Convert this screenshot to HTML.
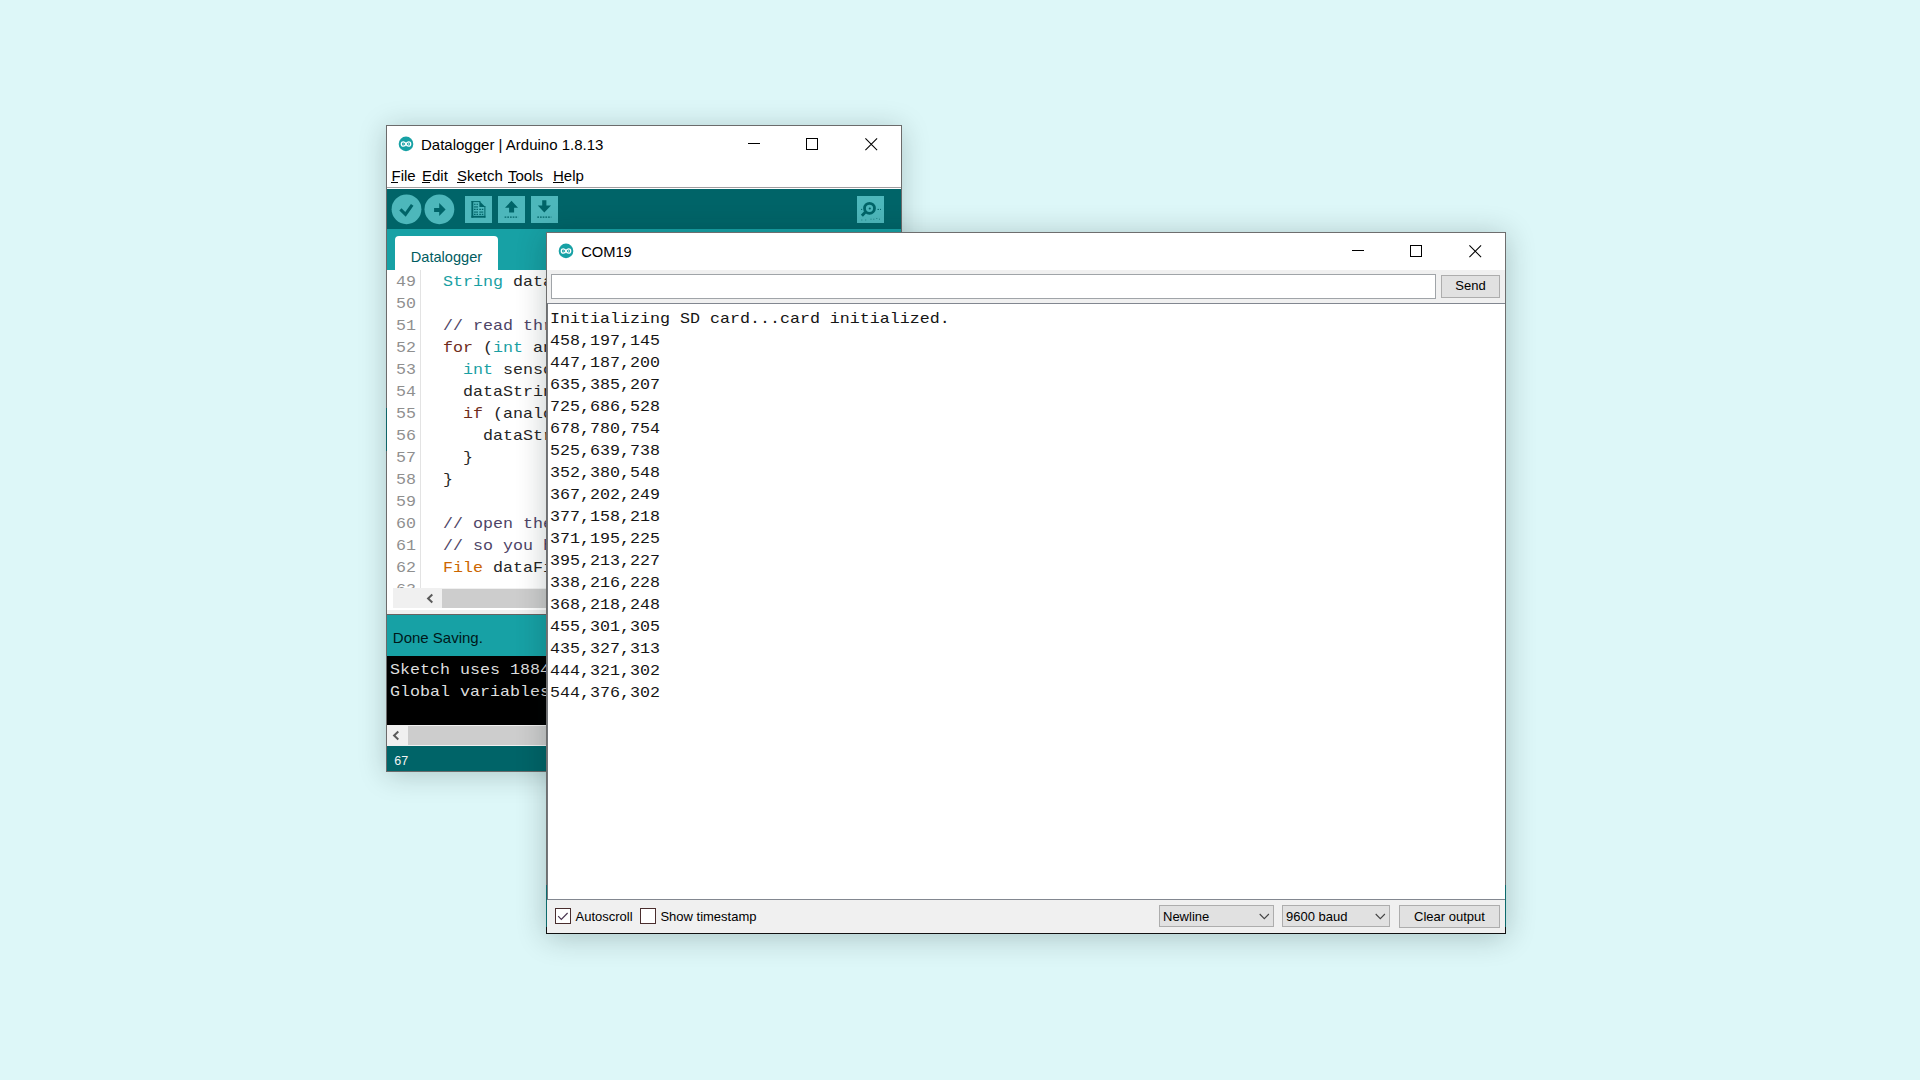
<!DOCTYPE html>
<html><head><meta charset="utf-8">
<style>
*{margin:0;padding:0;box-sizing:border-box}
html,body{width:1920px;height:1080px;overflow:hidden;background:#DDF7F8;font-family:"Liberation Sans",sans-serif;position:relative}
.abs{position:absolute}
.win{position:absolute;background:#fff;overflow:hidden}
.mono{font-family:"Liberation Mono",monospace;font-size:16.6667px;letter-spacing:0;white-space:pre;line-height:26.1905px;transform:scaleY(0.84);transform-origin:0 0}
.t15{font-size:15px;white-space:pre;line-height:18px;color:#000}
.t13{font-size:13px;white-space:pre;line-height:16px;color:#000}
u{text-decoration:none;border-bottom:1px solid #000;display:inline-block;line-height:14px}
.kw{color:#1A9FA3}.st{color:#6E2C1C}.cm{color:#4E4466}.fn{color:#CC6600}
</style></head><body>

<div id="ard" class="win" style="left:386px;top:125px;width:516px;height:647px;border:1px solid #6b6b6b;box-shadow:0 3px 26px rgba(0,30,30,0.21)">
<svg class="abs" style="left:11px;top:10px" width="16" height="16" viewBox="0 0 16 16">
<circle cx="8" cy="7.9" r="7.3" fill="#17A1A5"/>
<path d="M8 8 C7.2 5.3 3.3 4.9 3.3 8 C3.3 11.1 7.2 10.7 8 8 C8.8 5.3 12.7 4.9 12.7 8 C12.7 11.1 8.8 10.7 8 8 Z" fill="none" stroke="#fff" stroke-width="1.35"/>
<path d="M4.7 8h1.6M9.8 8h1.6M10.6 7.2v1.6" stroke="#e8f8f8" stroke-width="0.6"/>
</svg>
<div class="abs t15" style="left:34px;top:10px">Datalogger | Arduino 1.8.13</div>
<div class="abs" style="left:361px;top:17px;width:12px;height:1px;background:#000"></div>
<div class="abs" style="left:419px;top:12px;width:12px;height:12px;border:1px solid #000"></div>
<svg class="abs" style="left:478px;top:12px" width="13" height="13" viewBox="0 0 13 13"><path d="M0.4 0.4L12.1 12.1M12.1 0.4L0.4 12.1" stroke="#000" stroke-width="1.05"/></svg>
<div class="abs t15" style="left:4.5px;top:41px">File</div>
<div class="abs t15" style="left:35.0px;top:41px">Edit</div>
<div class="abs t15" style="left:70.0px;top:41px">Sketch</div>
<div class="abs t15" style="left:121.0px;top:41px">Tools</div>
<div class="abs t15" style="left:166.0px;top:41px">Help</div>
<div class="abs" style="left:4px;top:56px;width:7px;height:1px;background:#000"></div>
<div class="abs" style="left:35px;top:56px;width:8px;height:1px;background:#000"></div>
<div class="abs" style="left:70px;top:56px;width:8px;height:1px;background:#000"></div>
<div class="abs" style="left:121px;top:56px;width:8px;height:1px;background:#000"></div>
<div class="abs" style="left:166px;top:56px;width:11px;height:1px;background:#000"></div>
<div class="abs" style="left:0;top:61px;width:514px;height:1px;background:#a09da0"></div>
<div class="abs" style="left:0;top:63px;width:514px;height:40px;background:#006468"></div>
<svg class="abs" style="left:0;top:63px" width="514" height="40" viewBox="0 0 514 40">
<g fill="#4DB7BB">
<circle cx="19.5" cy="20.3" r="14.9"/>
<circle cx="52.4" cy="20.3" r="14.9"/>
<rect x="78" y="7" width="27" height="27"/>
<rect x="111" y="7" width="27" height="27"/>
<rect x="144" y="7" width="27" height="27"/>
<rect x="470" y="7" width="27" height="27"/>
</g>
<path d="M13.4 20.3 L18.5 25.4 L25.2 15.8" fill="none" stroke="#006468" stroke-width="3.1" stroke-linejoin="miter"/>
<path d="M47.1 19 H52.2 V14 L58.6 20.5 L52.2 27 V22.9 H47.1 Z" fill="#006468"/>
<g fill="#006468">
<rect x="84.4" y="12.1" width="1.9" height="16.6"/>
<rect x="84.4" y="26.8" width="14" height="1.9"/>
<rect x="84.4" y="12.1" width="9" height="1"/>
<rect x="97.4" y="17" width="1" height="11.7"/>
<path d="M92.4 12.1 L98.4 18 H92.4 Z"/>
</g>
<g stroke="#006468" stroke-width="1.1" stroke-dasharray="1.6 0.9">
<path d="M87 15.2h4M87 20.4h4M92.3 20.4h4M87 25.4h4M92.3 25.4h4"/>
</g>
<g fill="#006468" opacity="0.75">
<rect x="87" y="17.2" width="4" height="1.4"/>
<rect x="87" y="22.4" width="4" height="1.4"/>
<rect x="92.3" y="22.4" width="4" height="1.4"/>
</g>
<path d="M124.5 11.8 L131 18.8 H127.1 V23.5 H122.1 V18.8 H118 Z" fill="#006468"/>
<path d="M117.6 28.2h13.6" stroke="#006468" stroke-width="1.3" stroke-dasharray="1.7 1"/>
<path d="M155.2 11.3 H159.4 V16.5 H164 L157.3 23.5 L150.8 16.5 H155.2 Z" fill="#006468"/>
<path d="M150.3 28.2h14" stroke="#006468" stroke-width="1.3" stroke-dasharray="1.7 1"/>
<circle cx="482.5" cy="19.3" r="5" fill="none" stroke="#006468" stroke-width="2.8"/>
<circle cx="482.8" cy="19.5" r="1.1" fill="#006468"/>
<path d="M478.2 23.3 L474.9 26.8" stroke="#006468" stroke-width="2.8"/>
<path d="M474 20.4h1.2M490.5 20.4h1.5M493 20.4h1" stroke="#006468" stroke-width="1"/>
<g fill="#006468" opacity="0.6">
<rect x="474.3" y="30.5" width="1" height="1"/><rect x="478.2" y="30.5" width="1" height="1"/>
<rect x="483.5" y="29.7" width="1" height="1"/><rect x="486.3" y="29.7" width="1" height="1"/><rect x="489.3" y="29" width="1" height="1"/><rect x="492" y="29.7" width="1" height="1"/>
</g>
</svg>

<div class="abs" style="left:0;top:103px;width:514px;height:41px;background:#17A1A5"></div>
<div class="abs" style="left:8px;top:110px;width:103px;height:34px;background:#fff;border-radius:4px 4px 0 0"></div>
<div class="abs t15" style="left:23.8px;top:121.5px;color:#005C5F;font-size:14.6px">Datalogger</div>
<div class="abs" style="left:33px;top:144px;width:1px;height:318px;background:#e3e3e3"></div>
<div class="abs" style="left:0;top:144px;width:514px;height:318px;overflow:hidden">
<div class="abs mono" style="left:9px;top:2px;color:#8f8f8f">49</div>
<div class="abs mono" style="left:9px;top:24px;color:#8f8f8f">50</div>
<div class="abs mono" style="left:9px;top:46px;color:#8f8f8f">51</div>
<div class="abs mono" style="left:9px;top:68px;color:#8f8f8f">52</div>
<div class="abs mono" style="left:9px;top:90px;color:#8f8f8f">53</div>
<div class="abs mono" style="left:9px;top:112px;color:#8f8f8f">54</div>
<div class="abs mono" style="left:9px;top:134px;color:#8f8f8f">55</div>
<div class="abs mono" style="left:9px;top:156px;color:#8f8f8f">56</div>
<div class="abs mono" style="left:9px;top:178px;color:#8f8f8f">57</div>
<div class="abs mono" style="left:9px;top:200px;color:#8f8f8f">58</div>
<div class="abs mono" style="left:9px;top:222px;color:#8f8f8f">59</div>
<div class="abs mono" style="left:9px;top:244px;color:#8f8f8f">60</div>
<div class="abs mono" style="left:9px;top:266px;color:#8f8f8f">61</div>
<div class="abs mono" style="left:9px;top:288px;color:#8f8f8f">62</div>
<div class="abs mono" style="left:9px;top:310px;color:#8f8f8f">63</div>
<div class="abs mono" style="left:36px;top:2px;color:#262626">  <span class="kw">String</span> dataString = "";</div>
<div class="abs mono" style="left:36px;top:46px;color:#262626">  <span class="cm">// read three sensors and append to the string:</span></div>
<div class="abs mono" style="left:36px;top:68px;color:#262626">  <span class="st">for</span> (<span class="kw">int</span> analogPin = 0; analogPin &lt; 3; analogPin++) {</div>
<div class="abs mono" style="left:36px;top:90px;color:#262626">    <span class="kw">int</span> sensor = analogRead(analogPin);</div>
<div class="abs mono" style="left:36px;top:112px;color:#262626">    dataString += String(sensor);</div>
<div class="abs mono" style="left:36px;top:134px;color:#262626">    <span class="st">if</span> (analogPin &lt; 2) {</div>
<div class="abs mono" style="left:36px;top:156px;color:#262626">      dataString += ",";</div>
<div class="abs mono" style="left:36px;top:178px;color:#262626">    }</div>
<div class="abs mono" style="left:36px;top:200px;color:#262626">  }</div>
<div class="abs mono" style="left:36px;top:244px;color:#262626">  <span class="cm">// open the file. note that only one file can be open at a time,</span></div>
<div class="abs mono" style="left:36px;top:266px;color:#262626">  <span class="cm">// so you have to close this one before opening another.</span></div>
<div class="abs mono" style="left:36px;top:288px;color:#262626">  <span class="fn">File</span> dataFile = SD.open("datalog.txt", FILE_WRITE);</div>
</div>
<div class="abs" style="left:6px;top:462px;width:508px;height:20px;background:#f0f0f0"></div>
<div class="abs" style="left:55px;top:463px;width:459px;height:19px;background:#cdcdcd"></div>
<svg class="abs" style="left:39px;top:467px" width="9" height="11" viewBox="0 0 9 11"><path d="M6.3 1.5 L2.1 5.5 L6.3 9.5" fill="none" stroke="#5a5a5a" stroke-width="2"/></svg>
<div class="abs" style="left:0;top:484px;width:514px;height:4px;background:#f0f0f0"></div>
<div class="abs" style="left:0;top:488px;width:514px;height:1px;background:#6a6262"></div>
<div class="abs" style="left:0;top:489px;width:514px;height:41px;background:#17A1A5"></div>
<div class="abs t15" style="left:5.8px;top:503px;color:#00181a">Done Saving.</div>
<div class="abs" style="left:0;top:530px;width:514px;height:69px;background:#000"></div>
<div class="abs mono" style="left:3px;top:534px;color:#dedede">Sketch uses 18844 bytes (58%) of program storage space. Maximum is 32256 bytes.</div>
<div class="abs mono" style="left:3px;top:556px;color:#dedede">Global variables use 1064 bytes (51%) of dynamic memory, leaving 984 bytes for local variables. Maximum is 2048 bytes.</div>
<div class="abs" style="left:0;top:599px;width:514px;height:21px;background:#f0f0f0"></div>
<div class="abs" style="left:21px;top:600px;width:493px;height:19px;background:#cdcdcd"></div>
<svg class="abs" style="left:5px;top:604px" width="9" height="11" viewBox="0 0 9 11"><path d="M6.3 1.5 L2.1 5.5 L6.3 9.5" fill="none" stroke="#5a5a5a" stroke-width="2"/></svg>
<div class="abs" style="left:0;top:620px;width:514px;height:25px;background:#006468"></div>
<div class="abs" style="left:7.2px;top:627.5px;font-size:12.5px;line-height:15px;color:#f4f4f4">67</div>
</div>
<div class="abs" style="left:386px;top:408px;width:1px;height:43px;background:#0f6468"></div>
<div id="com" class="win" style="left:546px;top:232px;width:960px;height:702px;border:1px solid #6e6e6e;border-bottom-color:#111;box-shadow:0 3px 28px rgba(0,30,30,0.24)">
<svg class="abs" style="left:11px;top:10px" width="16" height="16" viewBox="0 0 16 16">
<circle cx="8" cy="7.9" r="7.3" fill="#17A1A5"/>
<path d="M8 8 C7.2 5.3 3.3 4.9 3.3 8 C3.3 11.1 7.2 10.7 8 8 C8.8 5.3 12.7 4.9 12.7 8 C12.7 11.1 8.8 10.7 8 8 Z" fill="none" stroke="#fff" stroke-width="1.35"/>
<path d="M4.7 8h1.6M9.8 8h1.6M10.6 7.2v1.6" stroke="#e8f8f8" stroke-width="0.6"/>
</svg>
<div class="abs t15" style="left:34.2px;top:10px;font-size:14.7px">COM19</div>
<div class="abs" style="left:805px;top:17px;width:12px;height:1px;background:#000"></div>
<div class="abs" style="left:863px;top:12px;width:12px;height:12px;border:1px solid #000"></div>
<svg class="abs" style="left:922px;top:12px" width="13" height="13" viewBox="0 0 13 13"><path d="M0.4 0.4L12.1 12.1M12.1 0.4L0.4 12.1" stroke="#000" stroke-width="1.05"/></svg>
<div class="abs" style="left:0;top:37px;width:958px;height:33px;background:#f0f0f0"></div>
<div class="abs" style="left:4px;top:41px;width:885px;height:25px;background:#fff;border:1px solid #a0a4a8"></div>
<div class="abs" style="left:894px;top:42px;width:59px;height:23px;background:#e1e1e1;border:1px solid #adadad"></div>
<div class="abs t13" style="left:894px;top:45px;width:59px;text-align:center">Send</div>
<div class="abs" style="left:0;top:70px;width:958px;height:597px;background:#fff;border-top:1px solid #828790;border-bottom:1px solid #828790;border-left:1px solid #73777b"></div>
<div class="abs mono" style="left:3px;top:76px;color:#151515">Initializing SD card...card initialized.</div>
<div class="abs mono" style="left:3px;top:98px;color:#151515">458,197,145</div>
<div class="abs mono" style="left:3px;top:120px;color:#151515">447,187,200</div>
<div class="abs mono" style="left:3px;top:142px;color:#151515">635,385,207</div>
<div class="abs mono" style="left:3px;top:164px;color:#151515">725,686,528</div>
<div class="abs mono" style="left:3px;top:186px;color:#151515">678,780,754</div>
<div class="abs mono" style="left:3px;top:208px;color:#151515">525,639,738</div>
<div class="abs mono" style="left:3px;top:230px;color:#151515">352,380,548</div>
<div class="abs mono" style="left:3px;top:252px;color:#151515">367,202,249</div>
<div class="abs mono" style="left:3px;top:274px;color:#151515">377,158,218</div>
<div class="abs mono" style="left:3px;top:296px;color:#151515">371,195,225</div>
<div class="abs mono" style="left:3px;top:318px;color:#151515">395,213,227</div>
<div class="abs mono" style="left:3px;top:340px;color:#151515">338,216,228</div>
<div class="abs mono" style="left:3px;top:362px;color:#151515">368,218,248</div>
<div class="abs mono" style="left:3px;top:384px;color:#151515">455,301,305</div>
<div class="abs mono" style="left:3px;top:406px;color:#151515">435,327,313</div>
<div class="abs mono" style="left:3px;top:428px;color:#151515">444,321,302</div>
<div class="abs mono" style="left:3px;top:450px;color:#151515">544,376,302</div>
<div class="abs" style="left:0;top:667px;width:958px;height:33px;background:#f0f0f0"></div>
<div class="abs" style="left:8px;top:675px;width:16px;height:16px;background:#fff;border:1px solid #4a2e2e"></div>
<svg class="abs" style="left:8px;top:675px" width="16" height="16" viewBox="0 0 16 16"><path d="M3.2 8.2 L6.3 11.3 L12.6 5" fill="none" stroke="#4a3550" stroke-width="1.2"/></svg>
<div class="abs t13" style="left:28.5px;top:676px">Autoscroll</div>
<div class="abs" style="left:93px;top:675px;width:16px;height:16px;background:#fff;border:1px solid #4a2e2e"></div>
<div class="abs t13" style="left:113.4px;top:676px">Show timestamp</div>
<div class="abs" style="left:612px;top:672px;width:115px;height:22px;background:#e1e1e1;border:1px solid #adadad"></div>
<div class="abs t13" style="left:616px;top:676px">Newline</div>
<svg class="abs" style="left:712px;top:680px" width="11" height="7" viewBox="0 0 11 7"><path d="M0.7 1 L5.3 5.6 L9.9 1" fill="none" stroke="#444" stroke-width="1.1"/></svg>
<div class="abs" style="left:735px;top:672px;width:108px;height:22px;background:#e1e1e1;border:1px solid #adadad"></div>
<div class="abs t13" style="left:739px;top:676px">9600 baud</div>
<svg class="abs" style="left:828px;top:680px" width="11" height="7" viewBox="0 0 11 7"><path d="M0.7 1 L5.3 5.6 L9.9 1" fill="none" stroke="#444" stroke-width="1.1"/></svg>
<div class="abs" style="left:852px;top:672px;width:101px;height:23px;background:#e1e1e1;border:1px solid #adadad"></div>
<div class="abs t13" style="left:852px;top:676px;width:101px;text-align:center">Clear output</div>
</div>
<div class="abs" style="left:546px;top:885px;width:1px;height:42px;background:#0d6a6c"></div>
<div class="abs" style="left:546px;top:927px;width:1px;height:7px;background:#111"></div>
<div class="abs" style="left:1505px;top:885px;width:1px;height:42px;background:#0d6a6c"></div>
<div class="abs" style="left:1505px;top:927px;width:1px;height:7px;background:#111"></div>
</body></html>
